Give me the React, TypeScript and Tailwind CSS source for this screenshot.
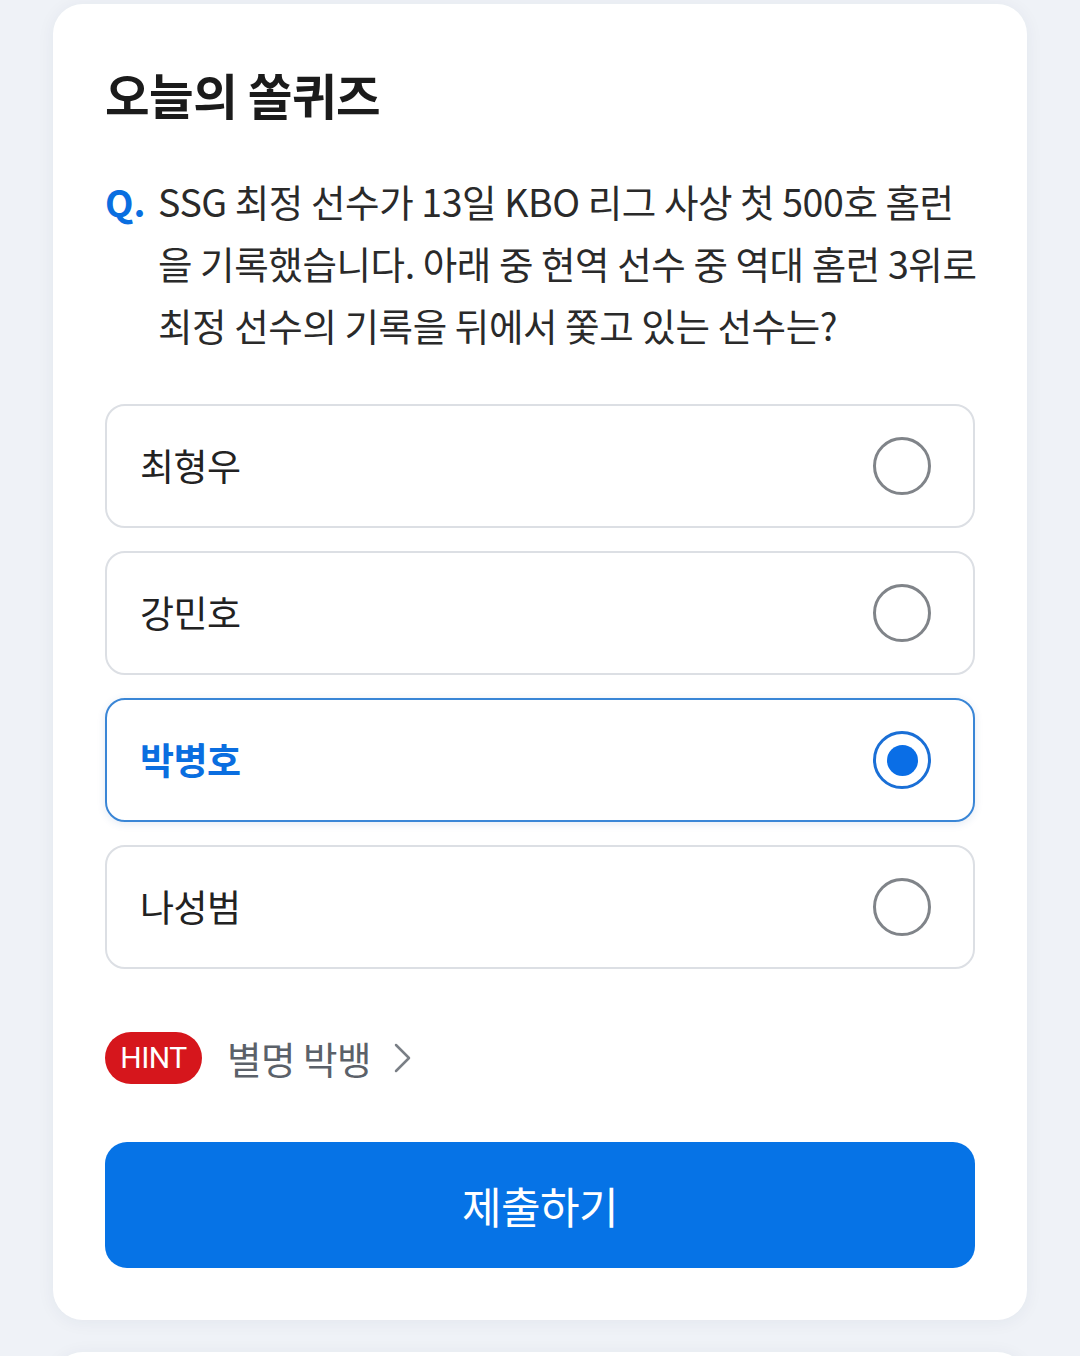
import React from "react";

const options = ["최형우", "강민호", "박병호", "나성범"];
const selected = 2;

const font = { fontFamily: '"Noto Sans CJK KR", "Noto Sans", sans-serif' };

export default function App() {
  return (
    <div
      className="h-[1356px] w-[1080px] bg-[#eff2f7] pt-[4px] overflow-hidden"
      style={font}
    >
      <div className="mx-[53px] rounded-[30px] bg-white px-[52px] pt-[60px] pb-[52px] shadow-[0_2px_18px_rgba(30,50,90,0.06)]">
        <h1 className="text-[48.5px] font-bold leading-[60px] tracking-[-0.5px] text-[#1b1b1b]">
          오늘의 쏠퀴즈
        </h1>

        <div className="mt-[46px] flex">
          <span className="w-[53px] shrink-0 text-[37px] font-bold leading-[62px] text-[#0a6ee0]">
            Q.
          </span>
          <div className="text-[37.5px] leading-[62px] tracking-[-0.4px] text-[#2a2a2a]">
            <div className="whitespace-nowrap">SSG 최정 선수가 13일 KBO 리그 사상 첫 500호 홈런</div>
            <div className="whitespace-nowrap">을 기록했습니다. 아래 중 현역 선수 중 역대 홈런 3위로</div>
            <div className="whitespace-nowrap">최정 선수의 기록을 뒤에서 쫓고 있는 선수는?</div>
          </div>
        </div>

        <div className="mt-[48px] flex flex-col gap-[23px]">
          {options.map((o, i) => {
            const sel = i === selected;
            return (
              <div
                key={o}
                className={
                  sel
                    ? "flex h-[124px] items-center justify-between rounded-[20px] border-2 border-[#3a86d6] bg-white pl-[33px] pr-[42px] shadow-[0_2px_8px_rgba(30,80,160,0.12)]"
                    : "flex h-[124px] items-center justify-between rounded-[20px] border-2 border-[#dcdfe4] bg-white pl-[33px] pr-[42px]"
                }
              >
                <span
                  className={
                    sel
                      ? "text-[37px] font-bold tracking-[-0.5px] text-[#0a6ee0]"
                      : "text-[37px] tracking-[-0.5px] text-[#222]"
                  }
                >
                  {o}
                </span>
                {sel ? (
                  <span className="flex h-[58px] w-[58px] items-center justify-center rounded-full border-[3px] border-[#1a6fd6]">
                    <span className="h-[31px] w-[31px] rounded-full bg-[#0a6ee6]" />
                  </span>
                ) : (
                  <span className="h-[58px] w-[58px] rounded-full border-[3px] border-[#808489]" />
                )}
              </div>
            );
          })}
        </div>

        <div className="mt-[63px] flex h-[52px] items-center">
          <span
            className="flex h-[52px] w-[97px] items-center justify-center rounded-full bg-[#d6161c] text-[30px] leading-[52px] tracking-[-0.5px] text-white"
            style={{ fontFamily: 'Roboto, "Liberation Sans", sans-serif' }}
          >
            HINT
          </span>
          <span className="ml-[25px] text-[37.5px] leading-[52px] tracking-[-0.5px] text-[#5b6169]">별명 박뱅</span>
          <svg className="ml-[22px]" width="20" height="32" viewBox="0 0 20 32" fill="none">
            <path d="M3 3 L16 16 L3 29" stroke="#7a7f86" strokeWidth="2.5" strokeLinecap="round" strokeLinejoin="round" />
          </svg>
        </div>

        <button className="mt-[58px] flex h-[126px] w-full items-center justify-center rounded-[22px] bg-[#0673e6] text-[43px] tracking-[-0.5px] text-white">
          제출하기
        </button>
      </div>

      <div className="mx-[53px] mt-[32px] h-[200px] rounded-[30px] bg-white shadow-[0_2px_18px_rgba(30,50,90,0.06)]" />
    </div>
  );
}
